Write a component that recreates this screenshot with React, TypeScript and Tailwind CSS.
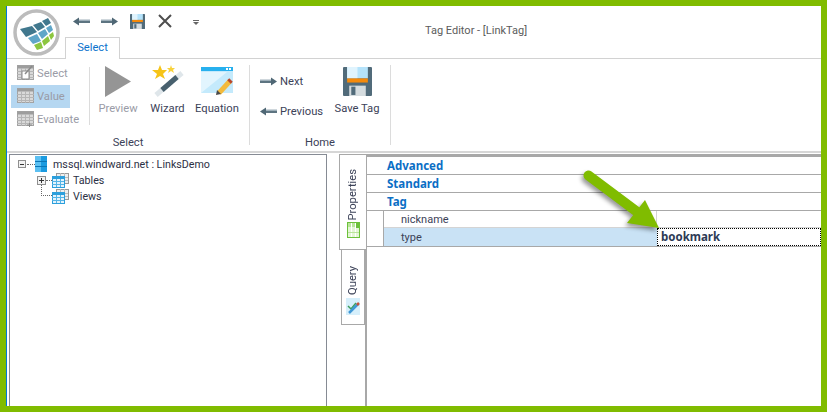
import React from "react";

const ui = "font-['Roboto',sans-serif]";
const heading = "flex h-[18px] items-center border-b border-[#a8a8a8] pl-[20px] pt-px font-['Noto_Sans',sans-serif] text-[11.5px] font-bold text-[#0b6ec5]";

const SmallArrow = ({ flip, w = 17 }: { flip?: boolean; w?: number }) => (
  <svg width={w} height="9" viewBox="0 0 17 9" className={flip ? "shrink-0 -scale-x-100" : "shrink-0"}>
    <rect x="0" y="2.5" width="12" height="1.5" fill="#9fb0ba" />
    <rect x="0" y="4" width="12" height="2" fill="#5d7481" />
    <polygon points="11,0.5 17,4.5 11,8.5" fill="#4f6775" />
  </svg>
);

const SaveIcon = ({ size }: { size: number }) => (
  <svg width={size} height={size} viewBox="0 0 28 28">
    <rect x="0" y="0" width="28" height="28" rx="1" fill="#516b7a" />
    <rect x="4" y="0" width="20" height="11" fill="#b5e3fb" />
    <rect x="4" y="0" width="10" height="11" fill="#e0f4fe" />
    <rect x="4" y="11" width="20" height="4" fill="#f58a0b" />
    <rect x="6" y="18" width="16" height="10" fill="#d5dcdf" />
    <rect x="8" y="19" width="4" height="8" fill="#516b7a" />
  </svg>
);

const GreyGrid = ({ kind }: { kind: "select" | "value" | "evaluate" }) => (
  <svg width="17" height="16" viewBox="0 0 17 16" className="shrink-0">
    <rect x="0.5" y="0.5" width="16" height="14" fill="#d9d9d9" stroke="#a3a3a3" />
    <rect x="0.5" y="0.5" width="16" height="3" fill="#9d9d9d" />
    {[4, 8, 12].map((x) => (
      <line key={x} x1={x + 0.5} y1="3" x2={x + 0.5} y2="15" stroke="#b5b5b5" />
    ))}
    {[6, 9, 12].map((y) => (
      <line key={y} x1="0" y1={y + 0.5} x2="17" y2={y + 0.5} stroke="#b5b5b5" />
    ))}
    {kind === "select" && (
      <>
        <rect x="5" y="6" width="7" height="8" fill="#fff" stroke="#8b8b8b" />
        <line x1="8" y1="9" x2="15" y2="1" stroke="#8b8b8b" strokeWidth="1.5" />
      </>
    )}
    {kind === "evaluate" && <path d="M10 14h5M12.5 12v4" stroke="#8b8b8b" />}
  </svg>
);

const Wand = () => (
  <svg width="34" height="32" viewBox="0 0 34 32">
    <polygon points="9,0 11,5 16,5 12,9 14,14 9,11 4,14 6,9 1,5 7,5" fill="#f6c417" />
    <polygon points="20,0 21,3 24,3 22,5 23,8 20,6 17,8 18,5 16,3 19,3" fill="#f8d23c" />
    <line x1="5" y1="30" x2="31" y2="8" stroke="#dfe6ea" strokeWidth="5" />
    <line x1="11" y1="25" x2="26" y2="12" stroke="#48606e" strokeWidth="5" />
  </svg>
);

const EquationIcon = () => (
  <svg width="33" height="28" viewBox="0 0 33 28">
    <rect x="0" y="0" width="32" height="26" fill="#c4eafc" />
    <polygon points="0,26 0,5 26,5" fill="#e2f5fe" />
    <rect x="0" y="0" width="32" height="4" fill="#27b0ee" />
    <rect x="25" y="1" width="2" height="2" fill="#fff" />
    <rect x="28" y="1" width="2" height="2" fill="#fff" />
    <line x1="18" y1="26" x2="29" y2="14" stroke="#f3ba3c" strokeWidth="5" />
    <line x1="28" y1="15" x2="30" y2="13" stroke="#b8472c" strokeWidth="5" />
    <polygon points="15,28 16,23 20,27" fill="#4a4a4a" />
  </svg>
);

const BlueTable = () => (
  <svg width="17" height="15" viewBox="0 0 17 15" className="shrink-0">
    <rect x="4.5" y="0.5" width="12" height="10" fill="#eee" stroke="#999" />
    <path d="M8.5 0v10M12.5 0v10M4 4.5h12M4 7.5h12" stroke="#bbb" />
    <rect x="0.5" y="3.5" width="12" height="11" fill="#e3f3fc" stroke="#2c9fdc" />
    <rect x="0.5" y="3.5" width="12" height="2.5" fill="#2c9fdc" />
    <path d="M4.5 6v8M8.5 6v8M0 8.5h12M0 11.5h12" stroke="#55b4e6" />
  </svg>
);

const Database = () => (
  <svg width="12" height="16" viewBox="0 0 12 16" className="shrink-0">
    <rect width="12" height="16" fill="#1c9be0" />
    <rect width="6" height="16" fill="#5cc0f2" />
    <path d="M0 5.5h12M0 10.5h12" stroke="#0c76b5" />
  </svg>
);

const Logo = () => (
  <svg width="47" height="47" viewBox="0 0 47 47" className="absolute left-[6px] top-[3px] z-10">
    <circle cx="23.5" cy="23.5" r="21.5" fill="#fff" stroke="#bcbcbc" strokeWidth="3.5" />
    <g fill="#41788e">
      <polygon points="7,20 19,17 24,23 13,28" />
      <polygon points="20,16 28,13 32,18 25,22" />
      <polygon points="29,12 35,9 38,14 33,17" />
    </g>
    <g fill="#5fa6c8">
      <polygon points="15,29 24,25 28,32 20,35" />
      <polygon points="25,24 32,20 35,25 29,30" />
      <polygon points="33,19 38,16 40,21 36,24" />
    </g>
    <g fill="#8cc63f">
      <polygon points="21,36 28,33 30,39 24,41" />
      <polygon points="29,32 35,27 37,32 31,37" />
      <polygon points="36,26 40,23 41,27 38,31" />
    </g>
  </svg>
);

const SideItem = ({ label, kind, on }: { label: string; kind: "select" | "value" | "evaluate"; on?: boolean }) => (
  <div className={`flex h-[23px] w-[59px] shrink-0 items-center gap-[3px] pl-[6px] ${on ? "bg-[#b5d7f1]" : ""}`}>
    <GreyGrid kind={kind} />
    <span className="mt-[2px] whitespace-nowrap text-[11.2px] text-[#9a9ba6]">{label}</span>
  </div>
);

const BigButton = ({ label, w, muted, children }: { label: string; w: string; muted?: boolean; children: React.ReactNode }) => (
  <div className={`flex flex-col items-center ${w}`}>
    <div className="flex h-[32px] items-center">{children}</div>
    <span className={`mt-[5px] whitespace-nowrap text-[11.2px] leading-[13px] ${muted ? "text-[#9a9ba6]" : "text-[#3c4258]"}`}>{label}</span>
  </div>
);

export default function App() {
  return (
    <div className={`h-[412px] w-[827px] overflow-hidden border-[6px] border-[#80bc00] bg-white ${ui}`}>
      <div className="relative flex h-full flex-col border-l border-[#0078d7]">
        <Logo />

        {/* title bar */}
        <div className="flex h-[31px] items-start pl-[66px] pt-[11px]">
          <SmallArrow flip />
          <div className="ml-[11px]"><SmallArrow /></div>
          <div className="ml-[12px] -mt-[3px]"><SaveIcon size={15} /></div>
          <svg width="14" height="14" viewBox="0 0 14 14" className="ml-[13px] -mt-[3px]">
            <path d="M1 1l12 12M13 1L1 13" stroke="#4e4e4e" strokeWidth="2" />
          </svg>
          <svg width="7" height="6" viewBox="0 0 7 6" className="ml-[21px] mt-[3px]">
            <path d="M0 0.5h6" stroke="#666" />
            <polygon points="0,2 6,2 3,5" fill="#666" />
          </svg>
          <span className="ml-[225px] self-end whitespace-nowrap text-[11px] leading-[12px] text-[#5c5c5c]">Tag Editor - [LinkTag]</span>
        </div>

        {/* tabs */}
        <div className="flex h-[22px] border-b border-[#d2d2d2] pl-[58px]">
          <div className="-mb-px flex h-[22px] w-[55px] items-center justify-center border border-b-0 border-[#d2d2d2] bg-white text-[11.2px] text-[#0a72cc]">
            Select
          </div>
        </div>

        {/* ribbon */}
        <div className="flex h-[92px] pt-[6px]">
          <div className="flex h-[80px] w-[243px] flex-col border-r border-[#dcdcdc]">
            <div className="flex flex-1">
              <div className="mt-[2px] flex h-[58px] w-[83px] flex-col justify-center border-r border-[#dcdcdc] pl-[4px]">
                <SideItem label="Select" kind="select" />
                <SideItem label="Value" kind="value" on />
                <SideItem label="Evaluate" kind="evaluate" />
              </div>
              <div className="flex pl-[3px]">
                <BigButton label="Preview" w="w-[50px]" muted>
                  <svg width="26" height="31" viewBox="0 0 26 31"><polygon points="0,0 26,15.5 0,31" fill="#959595" /></svg>
                </BigButton>
                <BigButton label="Wizard" w="w-[49px]"><Wand /></BigButton>
                <BigButton label="Equation" w="w-[50px]"><EquationIcon /></BigButton>
              </div>
            </div>
            <div className="-mb-[4px] text-center text-[11.2px] leading-[13px] text-[#3c4258]">Select</div>
          </div>

          <div className="flex h-[80px] w-[141px] flex-col border-r border-[#dcdcdc]">
            <div className="flex flex-1 pl-[10px]">
              <div className="mt-[1px] w-[72px] text-[11.2px] text-[#3c4258]">
                <div className="flex h-[30px] items-center gap-[3px]"><SmallArrow /><span className="mt-[2px]">Next</span></div>
                <div className="flex h-[30px] items-center gap-[3px]"><SmallArrow flip /><span className="mt-[2px]">Previous</span></div>
              </div>
              <BigButton label="Save Tag" w="w-[50px]"><SaveIcon size={29} /></BigButton>
            </div>
            <div className="-mb-[4px] text-center text-[11.2px] leading-[13px] text-[#3c4258]">Home</div>
          </div>
        </div>

        <div className="h-[2px] bg-[#d6d6d6]" />

        {/* body */}
        <div className="mt-px flex min-h-0 flex-1 pl-[2px]">
          {/* tree */}
          <div className="w-[318px] border-x border-t border-[#868b94] pt-px text-[10.7px] text-[#2c3044]">
            <div className="flex h-[16px] items-center pl-[8px]">
              <span className="flex h-[8px] w-[8px] items-center justify-center border border-[#8f8f8f] bg-[#f2f2f2]">
                <span className="h-px w-[4px] bg-[#333]" />
              </span>
              <span className="ml-px w-[8px] border-t border-dotted border-[#666]" />
              <Database />
              <span className="ml-[6px] mt-[2px] whitespace-nowrap">mssql.windward.net : LinksDemo</span>
            </div>
            <div className="flex h-[16px] items-center pl-[27px]">
              <span className="relative flex h-[9px] w-[9px] items-center justify-center border border-[#8f8f8f] bg-[#f2f2f2]">
                <span className="absolute h-px w-[5px] bg-[#333]" />
                <span className="absolute h-[5px] w-px bg-[#333]" />
              </span>
              <span className="w-[6px] border-t border-dotted border-[#666]" />
              <BlueTable />
              <span className="ml-[4px] mt-[2px]">Tables</span>
            </div>
            <div className="flex h-[16px] items-center pl-[31px]">
              <span className="-mt-[12px] h-[12px] w-[11px] border-b border-l border-dotted border-[#666]" />
              <BlueTable />
              <span className="ml-[4px] mt-[2px]">Views</span>
            </div>
          </div>

          {/* vertical tabs */}
          <div className="flex w-[38px] flex-col items-end text-[11.2px] text-[#3c4258]">
            <div className="relative z-10 -mr-px flex h-[96px] w-[27px] flex-col items-center justify-end gap-[2px] border-y border-l border-[#a8a8a8] bg-white pb-[11px]">
              <span className="whitespace-nowrap leading-[14px] [writing-mode:vertical-rl] rotate-180">Properties</span>
              <svg width="13" height="16" viewBox="0 0 13 16">
                <rect x="0.5" y="0.5" width="12" height="15" fill="#e4f6d6" stroke="#6cc13a" />
                <rect x="1" y="1" width="11" height="4" fill="#b9e59a" />
                <rect x="8" y="1" width="4" height="5" fill="#6cc13a" />
                <path d="M4.5 1v14M8.5 1v14" stroke="#fff" />
                <path d="M1 10.5h11" stroke="#b9e59a" />
              </svg>
            </div>
            <div className="flex h-[75px] w-[24px] flex-col items-center justify-end gap-[3px] border-x border-b border-[#a8a8a8] bg-white pb-[9px]">
              <span className="whitespace-nowrap leading-[14px] [writing-mode:vertical-rl] rotate-180">Query</span>
              <svg width="14" height="17" viewBox="0 0 14 17">
                <rect width="14" height="17" fill="#d6effb" />
                <path d="M2 8l3 3 5-6" stroke="#3c9e5c" strokeWidth="1.5" fill="none" />
                <line x1="3" y1="15" x2="12" y2="6" stroke="#3f97d6" strokeWidth="2.5" />
                <line x1="11" y1="7" x2="13" y2="5" stroke="#c9503a" strokeWidth="2.5" />
              </svg>
            </div>
          </div>

          {/* property grid */}
          <div className="flex-1 border-l-2 border-t-[3px] border-[#a8a8a8] text-[11px]">
            <div className={heading}>Advanced</div>
            <div className={heading}>Standard</div>
            <div className={heading}>Tag</div>
            <div className="flex border-b border-[#a8a8a8]">
              <div className="w-[16px] shrink-0" />
              <div className="flex-1 border-l border-[#a8a8a8] text-[#3c4258]">
                <div className="flex h-[17px] border-b border-[#d4d4d4]">
                  <div className="flex w-[273px] items-center border-r border-[#d4d4d4] pl-[17px] pt-[2px]">nickname</div>
                </div>
                <div className="flex h-[18px]">
                  <div className="flex w-[273px] items-center bg-[#c9e2f5] pl-[17px] pt-[2px]">type</div>
                  <div className="flex flex-1 items-center border border-dotted border-black pl-[3px] font-['Noto_Sans',sans-serif] text-[11.5px] font-bold text-[#2d3a55]">bookmark</div>
                </div>
              </div>
            </div>
          </div>
        </div>

        {/* callout arrow */}
        <svg width="90" height="72" viewBox="0 0 90 72" className="absolute left-[573px] top-[161px] z-20 drop-shadow-[-2px_3px_2px_rgba(0,0,0,0.4)]">
          <line x1="8.5" y1="8.5" x2="56" y2="44" stroke="#80bc00" strokeWidth="10" strokeLinecap="round" />
          <polygon points="65,33 79,61 47,56" fill="#80bc00" />
        </svg>
      </div>
    </div>
  );
}
